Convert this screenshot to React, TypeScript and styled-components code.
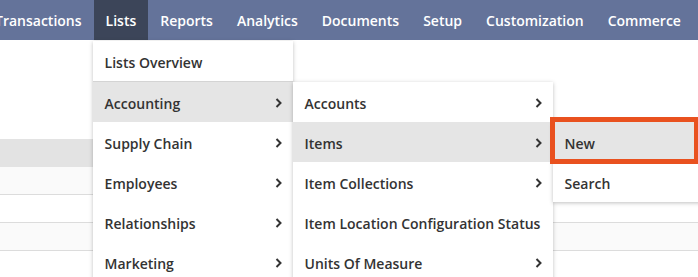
import styled, { createGlobalStyle } from "styled-components";

const GlobalStyle = createGlobalStyle`
  html, body {
    margin: 0;
    padding: 0;
    background: #fff;
    overflow: hidden;
  }
  body {
    font-family: "Open Sans", "Liberation Sans", sans-serif;
  }
`;

const Page = styled.div`
  width: 698px;
  height: 277px;
  position: relative;
  overflow: hidden;
`;

const NavBar = styled.nav`
  height: 40px;
  background-color: #64739a;
  display: flex;
  align-items: stretch;
  margin-left: -17px;
`;

const NavItem = styled.div<{ $active?: boolean }>`
  position: relative;
  display: flex;
  align-items: center;
  padding: 1px 12px 0;
  color: #fff;
  font-size: 14px;
  font-weight: 600;
  white-space: nowrap;
  background-color: ${(p) => (p.$active ? "#3c4559" : "transparent")};
`;

const Content = styled.div`
  padding-top: 99px;
`;

const TableRow = styled.div<{ $kind: "head" | "odd" | "even" }>`
  height: 27px;
  background-color: ${(p) =>
    p.$kind === "head" ? "#e3e3e3" : p.$kind === "odd" ? "#fafafa" : "#fff"};
  border-bottom: 1px solid ${(p) => (p.$kind === "head" ? "#e3e3e3" : "#dcdcdc")};
`;

const Menu = styled.div<{ $width: number; $top: string; $left: string }>`
  position: absolute;
  top: ${(p) => p.$top};
  left: ${(p) => p.$left};
  width: ${(p) => p.$width}px;
  background-color: #fff;
  box-shadow: 0 1px 4px rgba(0, 0, 0, 0.25);
  z-index: 10;
`;

const MenuItem = styled.div<{ $hover?: boolean; $divider?: boolean }>`
  position: relative;
  height: ${(p) => (p.$divider ? "41px" : "40px")};
  display: flex;
  align-items: center;
  justify-content: space-between;
  padding: 2px 11px 0 12px;
  box-sizing: border-box;
  font-size: 14px;
  font-weight: 600;
  color: #333;
  white-space: nowrap;
  background-color: ${(p) => (p.$hover ? "#e5e5e5" : "#fff")};
  border-bottom: ${(p) => (p.$divider ? "1px solid #d4d4d4" : "none")};
`;

const Highlight = styled.div`
  position: absolute;
  top: -5px;
  left: -3px;
  width: 139px;
  height: 37px;
  border: 5px solid #e9511f;
  pointer-events: none;
  z-index: 20;
`;

const Chevron = () => (
  <svg width="7" height="10" viewBox="0 0 7 10">
    <path d="M1.5 1 L5.5 5 L1.5 9" fill="none" stroke="#333" strokeWidth="2" />
  </svg>
);

const navItems = [
  "Transactions",
  "Lists",
  "Reports",
  "Analytics",
  "Documents",
  "Setup",
  "Customization",
  "Commerce",
];

export default function App() {
  return (
    <>
      <GlobalStyle />
      <Page>
        <NavBar>
          {navItems.map((name) => (
            <NavItem key={name} $active={name === "Lists"}>
              {name}
              {name === "Lists" && (
                <Menu $width={200} $top="41px" $left="-1px">
                  <MenuItem $divider>Lists Overview</MenuItem>
                  <MenuItem $hover>
                    Accounting
                    <Chevron />
                    <Menu $width={260} $top="0" $left="100%">
                      <MenuItem>
                        Accounts
                        <Chevron />
                      </MenuItem>
                      <MenuItem $hover>
                        Items
                        <Chevron />
                        <Menu $width={160} $top="0" $left="100%">
                          <MenuItem $hover>
                            New
                            <Highlight />
                          </MenuItem>
                          <MenuItem>Search</MenuItem>
                        </Menu>
                      </MenuItem>
                      <MenuItem>
                        Item Collections
                        <Chevron />
                      </MenuItem>
                      <MenuItem>Item Location Configuration Status</MenuItem>
                      <MenuItem>
                        Units Of Measure
                        <Chevron />
                      </MenuItem>
                    </Menu>
                  </MenuItem>
                  <MenuItem>
                    Supply Chain
                    <Chevron />
                  </MenuItem>
                  <MenuItem>
                    Employees
                    <Chevron />
                  </MenuItem>
                  <MenuItem>
                    Relationships
                    <Chevron />
                  </MenuItem>
                  <MenuItem>
                    Marketing
                    <Chevron />
                  </MenuItem>
                </Menu>
              )}
            </NavItem>
          ))}
        </NavBar>
        <Content>
          <TableRow $kind="head" />
          <TableRow $kind="odd" />
          <TableRow $kind="even" />
          <TableRow $kind="odd" />
          <TableRow $kind="even" />
        </Content>
      </Page>
    </>
  );
}
